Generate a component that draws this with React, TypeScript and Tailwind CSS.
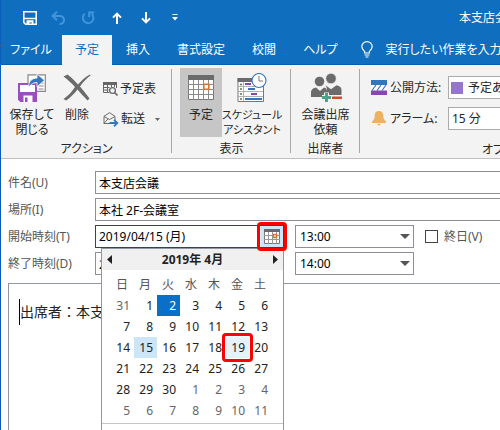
import { useState, type ReactNode } from "react"

type Day = { n: number; other?: boolean }

const TABS = ["挿入", "書式設定", "校閲", "ヘルプ"]
const WEEKDAYS = ["日", "月", "火", "水", "木", "金", "土"]
const TIMES = ["13:00", "13:30", "14:00", "14:30"]

// April 2019, with the days around it that fill six weeks
const DAYS: Day[] = [
  { n: 31, other: true },
  ...Array.from({ length: 30 }, (_, i) => ({ n: i + 1 })),
  ...Array.from({ length: 11 }, (_, i) => ({ n: i + 1, other: true })),
]
const WEEKS = Array.from({ length: 6 }, (_, w) => DAYS.slice(w * 7, w * 7 + 7))

/* ── Quick access icons ── */
const SaveIcon = () => (
  <svg width="14" height="14" viewBox="0 0 14 14" fill="none">
    <path d="M.8.8h12.4v12.4H2.600L.8 11.400z" stroke="#fff" strokeWidth="1.500" />
    <path d="M1 7.500h12" stroke="#fff" strokeWidth="1.500" />
    <path d="M3.500 9.300h7V14H8.800v-2.400H6.300V14H3.500z" fill="#fff" />
  </svg>
)
const UndoIcon = () => (
  <svg width="15" height="14" viewBox="0 0 15 14" fill="none" stroke="#4294dd" strokeWidth="2">
    <path d="M6 .8 1.600 5 6 9.200M2 5h7.200a3.900 3.900 0 0 1 3.900 4 3.900 3.900 0 0 1-3.900 4H8.500" />
  </svg>
)
const RedoIcon = () => (
  <svg width="14" height="14" viewBox="0 0 14 14" fill="none" stroke="#4294dd" strokeWidth="2">
    <path d="M3.800 2.800A5.300 5.300 0 1 0 10.800 3M8.200 6.300V1.500h5" />
  </svg>
)
const ArrowIcon = ({ down }: { down?: boolean }) => (
  <svg width="10" height="12" viewBox="0 0 10 12" fill="none" stroke="#fff" strokeWidth="2" className={down ? "rotate-180" : ""}>
    <path d="M5 12V1.600M1 5.600 5 1.600l4 4" />
  </svg>
)
const MoreIcon = () => (
  <svg width="6" height="7" viewBox="0 0 6 7" fill="#fff">
    <path d="M.5 0h5v1H.5zM0 3h6L3 6.500z" />
  </svg>
)
const BulbIcon = () => (
  <svg width="12" height="17" viewBox="0 0 12 17" fill="none" stroke="#fff" strokeWidth="1.200">
    <path d="M3.600 12V10.400C2.200 9 .8 7.800.8 5.600a5.200 5 0 0 1 10.400 0C11.200 7.800 9.800 9 8.400 10.400V12zM3.600 14h4.800M4.500 16h3" />
  </svg>
)

/* ── Ribbon icons ── */
const SaveCloseIcon = () => (
  <svg width="28" height="28" viewBox="0 0 28 28" fill="none">
    <path d="M10 .8h17.300v16.500H10z" fill="#fff" stroke="#888" strokeWidth="1.200" />
    <path d="M20.500 9h5M20.500 12h5M20.500 15h5" stroke="#888" />
    <path d="M1 10h17v17H3l-2-2z" fill="#fff" stroke="#9b4fbf" strokeWidth="2" />
    <path d="M0 18h19v10H2.500L0 25.500z" fill="#9b4fbf" />
    <path d="M5.500 21.500h9V28h-9z" fill="#fff" />
    <path d="M7 23.500h2.500V28H7z" fill="#9b4fbf" />
    <path d="M10.500 13.500C10.500 7 14 4.300 19 4.100V0l7.500 6.300L19 12.800V8.600c-4 0-6 1.500-8.500 4.900z" fill="#3277bd" stroke="#fff" strokeWidth=".8" />
  </svg>
)
const DeleteIcon = () => (
  <svg width="28" height="27" viewBox="0 0 28 27" fill="#6b6b6b">
    <path d="M4.500.5C9 4 12 7 15 10.500 19 6 22 3 27 .5l.5 1C23.500 4.500 20 8 17 12.500c3.500 4 6.500 8 9.500 12L24.500 26.500C21 23 18 19.500 14.500 15.500c-3.500 4.500-7 8-11.500 11L.5 25C5.500 21.500 9 17.500 12 13 8.500 9 4.500 5.500.5 2.500z" />
  </svg>
)
const CalendarSearchIcon = () => (
  <svg width="15" height="14" viewBox="0 0 15 14" fill="none" stroke="#666">
    <path d="M0 1.500h14" strokeWidth="3" />
    <path d="M.5 2v8.500H6M13.500 2v4M.5 5.500h6M.5 8h5M4.500 3v7.500M8.500 3v2M11.500 3v2" />
    <circle cx="9.500" cy="8.500" r="2.900" fill="#f3f3f3" strokeWidth="1.300" />
    <path d="m11.500 10.500 3 3" strokeWidth="1.600" />
  </svg>
)
const ForwardIcon = () => (
  <svg width="16" height="15" viewBox="0 0 16 15" fill="none">
    <path d="M7 11.500H1V4.300L6.500.7 12 4.300V8M1 4.500l5.500 3 5.500-3M1 11.300l4-4.300" stroke="#6b6b6b" />
    <path d="M6.500 11h7M11 7.800l3.300 3.200-3.300 3.300" stroke="#3277bd" strokeWidth="1.800" />
  </svg>
)
const MonthIcon = () => (
  <svg width="26" height="25" viewBox="0 0 26 25" fill="none">
    <path d="M.5 .5h25v24H.5z" fill="#fff" stroke="#777" />
    <path d="M0 0h26v5H0z" fill="#6b6b6b" />
    <path d="M0 9.500h26M0 14.500h26M0 19.500h26M5.500 5v20M10.500 5v20M15.500 5v20M20.500 5v20" stroke="#8a8a8a" />
    <path d="M15.800 9.300h5v5h-5z" fill="#fff" stroke="#e0732a" strokeWidth="1.600" />
  </svg>
)
const ScheduleIcon = () => (
  <svg width="30" height="29" viewBox="0 0 30 29" fill="none">
    <path d="M1 5.500h25.500v23H1z" fill="#fff" stroke="#777" />
    <path d="M.5 5h26v4H.5z" fill="#6b6b6b" />
    <path d="M6.500 9v19M1 13.500h25M1 18.500h25M1 23.500h25" stroke="#b0b0b0" />
    <path d="M3 11.500h2M3 16h2M3 21h2M3 26h2" stroke="#666" strokeWidth="1.500" />
    <path d="M8 11h6M14 21h6" stroke="#8a45b5" strokeWidth="2" />
    <path d="M11 16h7M8 26h17" stroke="#3277bd" strokeWidth="2" />
    <circle cx="22" cy="7.500" r="7" fill="#fff" stroke="#3277bd" strokeWidth="1.100" />
    <path d="M22 3v5h4" stroke="#777" />
  </svg>
)
const PeopleIcon = () => (
  <svg width="32" height="29" viewBox="0 0 32 29" fill="#6b6b6b">
    <circle cx="9.500" cy="8.500" r="4.800" />
    <path d="M1 24v-4.500C1 16.500 3.500 15 6 14.500l4 3.500 4-3.500c2 .5 3 1.500 3 4V24z" />
    <circle cx="21" cy="5.500" r="5.200" stroke="#f3f3f3" strokeWidth=".6" />
    <path d="M15.500 12.300l5.500 4 5.500-4c3.500.7 5 2 5 5V22H17v-4c0-2.500-.5-4-1.500-5.700z" />
    <path d="M16.500 19.500V29M12 24.500h20" stroke="#f3f3f3" strokeWidth="5" />
    <path d="M16.500 20v9M12 24.500h9" stroke="#46a58c" strokeWidth="3" />
    <path d="M22 23.500h10v2.500H22z" fill="#d9482b" />
  </svg>
)
const ShowAsIcon = () => (
  <svg width="16" height="15" viewBox="0 0 16 15" fill="none">
    <path d="M0 0h16v5H0z" fill="#3277bd" />
    <path d="M0 5h16v5.500H0z" fill="#fff" />
    <path d="m1 10.500 4-5.500M6 10.500 10 5M11 10.500 15 5" stroke="#3277bd" strokeWidth="1.200" />
    <path d="M0 10.500h16V15H0z" fill="#8a45b5" />
  </svg>
)
const BellIcon = () => (
  <svg width="14" height="15" viewBox="0 0 14 15" fill="#ecb262">
    <path d="M7 0c3 0 4.300 2 4.300 4.500 0 3 .7 4.500 2.700 6V12H0v-1.500c2-1.500 2.700-3 2.700-6C2.700 2 4 0 7 0zM5 12.800h4L7 15z" />
  </svg>
)
const PickerIcon = () => (
  <svg width="16" height="15" viewBox="0 0 16 15" fill="none">
    <path d="M.5.5h15v14H.5z" fill="#fff" stroke="#777" />
    <path d="M0 0h16v3H0z" fill="#6b6b6b" />
    <path d="M0 6.500h16M0 10.500h16M4.500 3v12M8.500 3v12M12.500 3v12" stroke="#999" />
    <path d="M9.500 5.500h3v3h-3z" fill="#fff" stroke="#e0732a" strokeWidth="1.400" />
  </svg>
)
const Triangle = ({ d, className = "" }: { d: string; className?: string }) => (
  <svg width="10" height="10" viewBox="0 0 10 10" fill="currentColor" className={className}><path d={d} /></svg>
)

function Group({ label, children, className = "" }: { label: string; children: ReactNode; className?: string }) {
  return (
    <section className={`relative flex shrink-0 flex-col pt-[3px] after:absolute after:top-1 after:right-0 after:h-[84px] after:w-px after:bg-[#a8a8a8] ${className}`}>
      <div className="flex h-[70px]">{children}</div>
      <p className="text-center leading-6">{label}</p>
    </section>
  )
}

function BigButton({ icon, lines, className = "" }: { icon: ReactNode; lines: string[]; className?: string }) {
  return (
    <button className={`flex flex-col items-center whitespace-nowrap leading-[15px] ${className}`}>
      <span className="flex h-[39px] items-center">{icon}</span>
      {lines.map(l => <span key={l}>{l}</span>)}
    </button>
  )
}

function TimeSelect({ label, value }: { label: string; value: string }) {
  return (
    <div className="relative ml-[11px] w-[119px]">
      <select aria-label={label} defaultValue={value} className="h-[23px] w-full appearance-none border border-[#8e8e98] bg-white px-1 leading-5 text-black">
        {TIMES.map(t => <option key={t}>{t}</option>)}
      </select>
      <Triangle d="M0 3h10L5 8z" className="pointer-events-none absolute top-[6px] right-1 text-[#555]" />
    </div>
  )
}

function MonthPopup({ selected, onSelect }: { selected: number; onSelect: (n: number) => void }) {
  return (
    <div className="absolute top-full left-[6px] z-10 w-[183px] border border-[#8e98a5] bg-white">
      <div className="flex h-[21px] items-center justify-between bg-[#f0f0f0] px-[3px] font-bold text-[#222]">
        <button aria-label="前の月"><Triangle d="M7 0v9L2 4.500z" /></button>
        <span>2019年 4月</span>
        <button aria-label="次の月"><Triangle d="M3 0v9l5-4.500z" /></button>
      </div>
      <table className="mt-1 ml-[9px] table-fixed border-collapse">
        <thead>
          <tr className="h-[21px]">
            {WEEKDAYS.map(w => <th key={w} className="w-[23px] pr-px text-center font-normal text-[#555]">{w}</th>)}
          </tr>
        </thead>
        <tbody>
          {WEEKS.map((week, i) => (
            <tr key={i}>
              {week.map(d => {
                const today = d.n === 2 && !d.other
                const picked = d.n === selected && !d.other
                const target = d.n === 19
                return (
                  <td key={d.n} className="relative p-0">
                    <button
                      onClick={() => onSelect(d.n)}
                      className={`block h-[21px] w-[23px] pr-1 text-right leading-[21px] ${
                        today ? "bg-[#0a6fc8] text-white" : picked ? "bg-[#cde6f7] text-[#222]" : target ? "bg-[#e6f2fa] text-[#222]" : d.other ? "text-[#666]" : "text-[#222]"
                      }`}
                    >
                      {d.n}
                    </button>
                    {target && <span className="pointer-events-none absolute -inset-1 rounded-sm border-3 border-[#f00]" />}
                  </td>
                )
              })}
            </tr>
          ))}
        </tbody>
      </table>
      <div className="mt-[2px] flex h-8 items-center justify-center border-t border-[#c6c6c6]" />
    </div>
  )
}

export default function App() {
  const [selected, setSelected] = useState(15)
  const date = `2019/04/${selected} (月)`

  return (
    <div lang="ja" className="flex h-screen flex-col overflow-hidden border-l border-[#0a5db8] bg-white font-['Noto_Sans','Noto_Sans_CJK_JP',sans-serif] text-xs text-[#262626] [font-feature-settings:'palt']">
      {/* ── Title bar and tabs ── */}
      <header className="border-b border-[#0a5db0] bg-[#106ebe] text-white">
        <div className="flex h-[35px] items-center justify-between pl-[14px]">
          <div className="flex">
            {[
              { label: "上書き保存", icon: <SaveIcon /> },
              { label: "元に戻す", icon: <UndoIcon /> },
              { label: "やり直し", icon: <RedoIcon /> },
              { label: "前のアイテム", icon: <ArrowIcon /> },
              { label: "次のアイテム", icon: <ArrowIcon down /> },
              { label: "カスタマイズ", icon: <MoreIcon /> },
            ].map(b => (
              <button key={b.label} aria-label={b.label} className="flex h-5 w-[29px] items-center justify-center">{b.icon}</button>
            ))}
          </div>
          <h1 className="w-[41px] whitespace-nowrap">本支店会議</h1>
        </div>
        <nav className="flex h-[29px] gap-px whitespace-nowrap leading-[30px]">
          <button className="w-[60px] shrink-0">ファイル</button>
          <button className="-mb-px shrink-0 bg-[#f3f3f3] px-[13px] text-[#106ebe]">予定</button>
          {TABS.map(t => <button key={t} className="shrink-0 px-[13px]">{t}</button>)}
          <button className="ml-[9px] flex shrink-0 items-center gap-[13px]"><BulbIcon />実行したい作業を入力し</button>
        </nav>
      </header>

      {/* ── Ribbon ── */}
      <div className="flex h-[94px] shrink-0 overflow-hidden border-b border-[#c0c0c0] bg-[#f3f3f3]">
        <Group label="アクション" className="w-[171px]">
          <BigButton icon={<SaveCloseIcon />} lines={["保存して", "閉じる"]} className="ml-1 w-[54px]" />
          <BigButton icon={<DeleteIcon />} lines={["削除"]} className="w-9" />
          <div className="ml-2 flex flex-col gap-[10px] pt-[11px] leading-5">
            <button className="flex items-center gap-[2px]"><CalendarSearchIcon />予定表</button>
            <button className="flex items-center gap-[2px]">
              <ForwardIcon />転送
              <svg width="5" height="3" viewBox="0 0 5 3" fill="#666" className="ml-2"><path d="M0 0h5L2.500 3z" /></svg>
            </button>
          </div>
        </Group>
        <Group label="表示" className="w-[119px]">
          <BigButton icon={<MonthIcon />} lines={["予定"]} className="ml-2 w-[42px] bg-[#c6c6c6]" />
          <BigButton icon={<ScheduleIcon />} lines={["スケジュール", "アシスタント"]} className="w-[60px] text-[11px]" />
        </Group>
        <Group label="出席者" className="w-[69px]">
          <BigButton icon={<PeopleIcon />} lines={["会議出席", "依頼"]} className="w-full" />
        </Group>
        <section className="flex flex-1 flex-col pt-[11px] pl-[11px]">
          <div className="flex shrink-0 items-center whitespace-nowrap">
            <label htmlFor="showas" className="flex w-[77px] shrink-0 items-center gap-[3px]"><ShowAsIcon />公開方法:</label>
            <div className="flex h-[23px] flex-1 items-center gap-[5px] border border-r-0 border-[#ababab] bg-white pl-[2px]">
              <span className="size-3 shrink-0 bg-[#9575cd]" />
              <select id="showas" className="w-20 shrink-0 appearance-none"><option>予定あり</option></select>
            </div>
          </div>
          <div className="mt-2 flex shrink-0 items-center whitespace-nowrap">
            <label htmlFor="alarm" className="flex w-[77px] shrink-0 items-center gap-1 pl-px"><BellIcon />アラーム:</label>
            <select id="alarm" className="h-[23px] flex-1 appearance-none border border-r-0 border-[#ababab] bg-white pl-[3px]"><option>15 分</option></select>
          </div>
          <p className="mt-2 pl-[111px] whitespace-nowrap leading-6">オプション</p>
        </section>
      </div>

      {/* ── Appointment form ── */}
      <main className="flex flex-1 flex-col pt-3 pl-[7px] text-[#555]">
        <div className="grid grid-cols-[87px_1fr] items-center gap-y-1 whitespace-nowrap">
          <label htmlFor="subject">件名(U)</label>
          <input id="subject" defaultValue="本支店会議" className="h-[23px] border border-r-0 border-[#8e8e98] pl-[3px] text-black" />
          <label htmlFor="place">場所(I)</label>
          <input id="place" defaultValue="本社 2F-会議室" className="h-[23px] border border-r-0 border-[#8e8e98] pl-[3px] text-black" />

          <label htmlFor="start">開始時刻(T)</label>
          <div className="flex items-center">
            <div className="relative w-[189px]">
              <div className="flex h-[23px] border border-[#0b48a0]">
                <input id="start" readOnly value={date} className="min-w-0 flex-1 pl-[3px] text-black outline-none" />
                <button aria-label="日付を選択" className="relative z-20 flex w-[22px] items-center justify-center bg-[#cde6f7]">
                  <PickerIcon />
                  <span className="absolute -inset-1 rounded-sm border-3 border-[#f00]" />
                </button>
              </div>
              <MonthPopup selected={selected} onSelect={setSelected} />
            </div>
            <TimeSelect label="開始" value="13:00" />
            <label className="ml-[11px] flex items-center gap-[6px]">
              <input type="checkbox" className="size-[13px] appearance-none border border-[#444] bg-white" />
              終日(V)
            </label>
          </div>

          <label htmlFor="end">終了時刻(D)</label>
          <div className="flex items-center">
            <input id="end" readOnly value={date} className="h-[23px] w-[189px] border border-[#8e8e98] pl-[3px] text-black" />
            <TimeSelect label="終了" value="14:00" />
          </div>
        </div>
        <div className="mt-2 flex flex-1 border-t border-l border-[#8e98a5] pt-[15px] pl-[10px]">
          <span className="h-[26px] w-px bg-black" />
          <textarea aria-label="本文" defaultValue="出席者：本支店" className="flex-1 resize-none text-sm leading-[26px] text-[#222] [font-feature-settings:normal] outline-none" />
        </div>
      </main>
    </div>
  )
}
